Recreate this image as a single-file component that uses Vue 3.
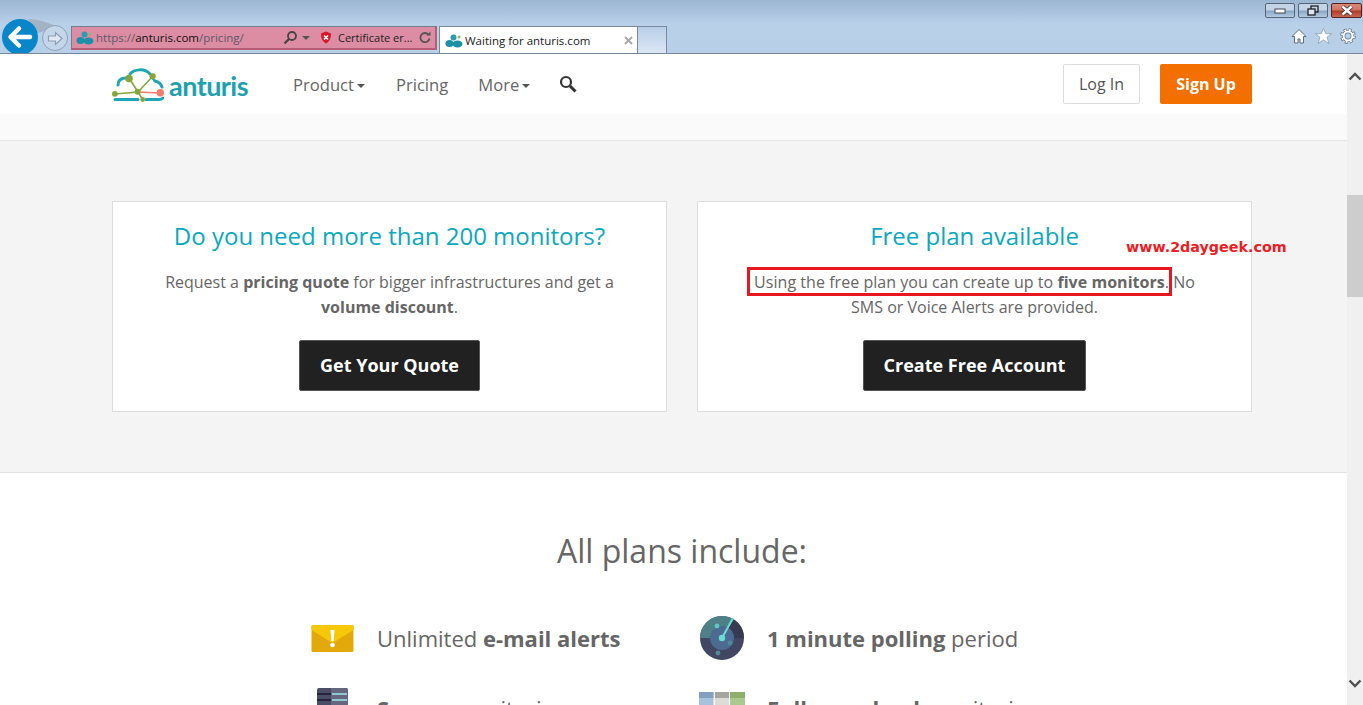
<script setup>
const includes = [
  { pre: 'Unlimited ', bold: 'e-mail alerts', post: '', icon: 'mail' },
  { pre: '', bold: '1 minute polling', post: ' period', icon: 'radar' },
  { pre: '', bold: 'Server', post: ' monitoring', icon: 'server' },
  { pre: '', bold: 'Full-page load', post: ' monitoring', icon: 'page' }
]
</script>

<template>
  <div class="shell">
    <header class="chrome">
      <div class="winbtns">
        <span class="wb"><svg width="12" height="6"><rect x="1" y="1" width="10" height="4" fill="#fff" stroke="#445" stroke-width="1"/></svg></span>
        <span class="wb"><svg width="14" height="12" viewBox="0 0 14 12"><rect x="5" y="1" width="7" height="6" fill="none" stroke="#222" stroke-width="1.300"/><rect x="2" y="4" width="7" height="6" fill="#dde6f2" stroke="#222" stroke-width="1.300"/></svg></span>
        <span class="wb close"><svg width="16" height="11" viewBox="0 0 16 11"><path d="M3.500 1.500l9 8M12.500 1.500l-9 8" stroke="#333" stroke-width="4"/><path d="M3.500 1.500l9 8M12.500 1.500l-9 8" stroke="#fff" stroke-width="2.400"/></svg></span>
      </div>
      <div class="toolbar">
        <div class="navbtns">
          <svg class="halo" width="50" height="16" viewBox="0 0 50 16"><path d="M18 0C30 0 38 4 48 8L28 14z" fill="#a4b3c4"/></svg>
          <span class="back"><svg width="38" height="38" viewBox="0 0 38 38"><path d="M10 19h19M18 10.500 9.500 19l8.500 8.500" fill="none" stroke="#fff" stroke-width="4.500" stroke-linecap="round" stroke-linejoin="round"/></svg></span>
          <span class="fwd"><svg width="17" height="15" viewBox="0 0 17 15"><path d="M1.500 5h7V1.500l6.500 6-6.500 6V10h-7z" fill="#dfe8f3" stroke="#8d9db0" stroke-width="1.200"/></svg></span>
        </div>
        <div class="address">
          <svg class="fav" width="18" height="14" viewBox="0 0 18 14"><ellipse cx="4.500" cy="9.500" rx="4" ry="3.500" fill="#1d8fa6"/><ellipse cx="12.500" cy="10" rx="5" ry="3.500" fill="#1d8fa6"/><circle cx="8.500" cy="3.500" r="3" fill="#2a9db3"/><circle cx="14" cy="3" r="1.500" fill="#8fb66c"/></svg>
          <span class="url"><span class="dim">https://</span>anturis.com<span class="dim">/pricing/</span></span>
          <svg class="lens" width="15" height="15" viewBox="0 0 15 15"><circle cx="9" cy="6" r="4" fill="none" stroke="#444" stroke-width="1.800"/><path d="M6 9l-4.500 4.500" stroke="#444" stroke-width="2.200"/></svg>
          <span class="caret"></span>
          <svg class="shield" width="12" height="13" viewBox="0 0 12 13"><path d="M1 2.500 6 .5l5 2c0 5-1.500 8-5 10-3.500-2-5-5-5-10z" fill="#d8182a"/><path d="M4 4.500l4 4M8 4.500l-4 4" stroke="#fff" stroke-width="1.600"/></svg>
          <span class="cert">Certificate er...</span>
          <svg class="reload" width="12" height="13" viewBox="0 0 12 13"><path d="M9.800 4a4.600 4.600 0 1 0 .7 3.500" fill="none" stroke="#555" stroke-width="1.800"/><path d="M7.500 4.500h4v-4z" fill="#555"/></svg>
        </div>
        <div class="tab">
          <svg class="fav" width="18" height="14" viewBox="0 0 18 14"><ellipse cx="4.500" cy="9.500" rx="4" ry="3.500" fill="#1d8fa6"/><ellipse cx="12.500" cy="10" rx="5" ry="3.500" fill="#1d8fa6"/><circle cx="8.500" cy="3.500" r="3" fill="#2a9db3"/><circle cx="14" cy="3" r="1.500" fill="#8fb66c"/></svg>
          <span class="tabtitle">Waiting for anturis.com</span>
          <svg class="tabx" width="9" height="9" viewBox="0 0 9 9"><path d="M1 1l7 7M8 1l-7 7" stroke="#aaa" stroke-width="2"/></svg>
        </div>
        <div class="newtab"></div>
        <div class="tools">
          <svg width="16" height="16" viewBox="0 0 16 16"><path d="M8 1.500 1 8.500h2.500V15h3.500v-4h2v4h3.500V8.500H15z" fill="#fff" stroke="#5c6e83"/></svg>
          <svg width="17" height="16" viewBox="0 0 17 16"><path d="M8.500 .5l2.300 5.200H16.500l-4.500 3.500 1.800 6.300-5.300-3.600-5.300 3.600 1.800-6.300L.5 5.700h5.700z" fill="#fff" stroke="#8192a8" stroke-width=".7"/></svg>
          <svg width="16" height="16" viewBox="0 0 16 16"><circle cx="8" cy="8" r="6" fill="none" stroke="#5c6e83" stroke-width="3.600" stroke-dasharray="2.700 2"/><circle cx="8" cy="8" r="4.400" fill="none" stroke="#5c6e83" stroke-width="3.400"/><circle cx="8" cy="8" r="4.400" fill="none" stroke="#fff" stroke-width="2"/><circle cx="8" cy="8" r="6" fill="none" stroke="#fff" stroke-width="2" stroke-dasharray="1.800 2.900" stroke-dashoffset="-.45"/></svg>
        </div>
      </div>
    </header>

    <div class="viewport">
      <main class="page">
        <nav class="nav">
          <div class="brand">
            <svg width="52" height="34" viewBox="0 0 52 34">
              <path d="M18 6C22 1 33 0 38 6M6 17C6 12 9 10 14 10M43 13C47 14 49 16 50 19M3 31.500H26M34 31.500H47C49 31.500 50 31 51 30" fill="none" stroke="#1fa5b5" stroke-width="3" stroke-linecap="round"/>
              <path d="M38 8l5 5" stroke="#1fa5b5" stroke-width="2"/>
              <path d="M3 26 26 24 41 8M17 10 26 24 31 32" fill="none" stroke="#86a63c" stroke-width="1.600"/>
              <path d="M26 24l22 1" stroke="#f47c6e" stroke-width="1.600"/>
              <circle cx="17" cy="10.500" r="3.800" fill="#86a63c"/><circle cx="40.700" cy="8.300" r="3" fill="#86a63c"/><circle cx="2.900" cy="25.800" r="2.900" fill="#86a63c"/><circle cx="25.700" cy="23.700" r="3" fill="#86a63c"/><circle cx="30.700" cy="31.500" r="2.400" fill="#86a63c"/><circle cx="48.300" cy="24.800" r="3.700" fill="#f47c6e"/>
            </svg>
            <span class="wordmark">anturis</span>
          </div>
          <ul class="links">
            <li>Product<i class="drop"></i></li>
            <li>Pricing</li>
            <li>More<i class="drop"></i></li>
            <li class="find"><svg width="18" height="18" viewBox="0 0 18 18"><circle cx="7" cy="7" r="5" fill="none" stroke="#333" stroke-width="2.200"/><path d="M11 11l5.500 5.500" stroke="#333" stroke-width="3"/></svg></li>
          </ul>
          <div class="auth">
            <a class="login">Log In</a>
            <a class="signup">Sign Up</a>
          </div>
        </nav>
        <div class="strip"></div>

        <section class="band">
          <div class="cards">
            <article class="card">
              <h2>Do you need more than 200 monitors?</h2>
              <p>Request a <b>pricing quote</b> for bigger infrastructures and get a <b>volume discount</b>.</p>
              <a class="cta">Get Your Quote</a>
            </article>
            <article class="card">
              <h2>Free plan available</h2>
              <p><span class="mark">Using the free plan you can create up to <b>five monitors</b>.</span> No<br>SMS or Voice Alerts are provided.</p>
              <a class="cta">Create Free Account</a>
              <span class="watermark">www.2daygeek.com</span>
            </article>
          </div>
        </section>

        <section class="plans">
          <h1>All plans include:</h1>
          <div class="grid">
            <div v-for="item in includes" :key="item.bold" class="feat">
              <span class="ico">
                <svg v-if="item.icon === 'mail'" width="43" height="27" viewBox="0 0 42 27"><rect width="42" height="27" rx="1.500" fill="#e3a90b"/><path d="M0 1.500Q0 0 1.500 0h39Q42 0 42 1.500V5L21 18 0 5z" fill="#f7c808"/><path d="M19 5h4l-.8 11h-2.400z" fill="#fff"/><circle cx="21" cy="20" r="2.300" fill="#fff"/></svg>
                <svg v-else-if="item.icon === 'radar'" width="44" height="44" viewBox="0 0 44 44"><circle cx="22" cy="22" r="22" fill="#414763"/><path d="M0 22A22 22 0 0 1 34 3.500L22 22z" fill="#4f8088"/><path d="M34 3.500A22 22 0 0 1 44 22H22z" fill="#373a52"/><circle cx="22" cy="22" r="12" fill="#4d6a90"/><path d="M22 22 33 2" stroke="#6adbd5" stroke-width="2"/><circle cx="22" cy="22" r="3.200" fill="#6adbd5"/><circle cx="17" cy="10" r="2.400" fill="#5fc7c5"/><circle cx="30" cy="27" r="2.400" fill="#4f8a96"/><circle cx="18" cy="37" r="2.400" fill="#4f8a96"/></svg>
                <svg v-else-if="item.icon === 'server'" width="31" height="40" viewBox="0 0 31 40"><rect width="31" height="40" rx="2" fill="#4b4c66"/><path d="M14 0h15a2 2 0 0 1 2 2v38H14z" fill="#65677f"/><path d="M0 6h14M0 12h14" stroke="#24243a" stroke-width="2"/><path d="M15 6h15M15 12h15" stroke="#8ec8d0" stroke-width="2"/></svg>
                <svg v-else width="46" height="32" viewBox="0 0 46 32"><rect width="14.500" height="32" fill="#a8c0dc"/><rect width="14.500" height="6" fill="#83a0c0"/><rect x="16" width="14" height="32" fill="#dcdbd6"/><rect x="16" width="14" height="6" fill="#a5a49e"/><rect x="31" width="15" height="32" rx="1" fill="#a9c98e"/><rect x="31" width="15" height="6" fill="#8ab06a"/></svg>
              </span>
              <span class="ftext">{{ item.pre }}<b>{{ item.bold }}</b>{{ item.post }}</span>
            </div>
          </div>
        </section>
      </main>

      <aside class="scroll">
        <svg class="arrow" width="14" height="9" viewBox="0 0 14 9"><path d="M1.500 7.500 7 2l5.500 5.500" fill="none" stroke="#505050" stroke-width="2.400"/></svg>
        <div class="thumb"></div>
        <svg class="arrow down" width="14" height="9" viewBox="0 0 14 9"><path d="M1.500 1.500 7 7l5.500-5.500" fill="none" stroke="#505050" stroke-width="2.400"/></svg>
      </aside>
    </div>
  </div>
</template>

<style>
html, body { margin: 0; overflow: hidden; background: #fff; }
</style>

<style scoped>
.shell { width: 1363px; height: 705px; overflow: hidden; display: flex; flex-direction: column; font-family: "Open Sans", sans-serif; color: #666; }
.chrome { height: 54px; box-sizing: border-box; position: relative; border-bottom: 1px solid #76879b; background: linear-gradient(#9cb6d2 0, #b9d0e9 24px, #b8cfe8 100%); display: flex; align-items: flex-end; flex: none; }
.winbtns { position: absolute; top: 3px; right: 1px; display: flex; gap: 3px; }
.wb { width: 30px; height: 15px; box-sizing: border-box; border: 1px solid #56667a; border-radius: 2px; background: linear-gradient(#c3d4e8 0, #c3d4e8 45%, #8ba7c4 55%, #b5cbe2 100%); display: flex; align-items: center; justify-content: center; }
.wb.close { background: linear-gradient(#d98a78 0, #d4725f 45%, #b13a26 55%, #c76a55 100%); border-color: #5a2020; width: 31px; }
.toolbar { flex: 1; height: 34px; display: flex; align-items: flex-end; position: relative; }
.navbtns { width: 71px; height: 34px; display: flex; align-items: flex-start; flex: none; position: relative; overflow: hidden; }
.halo { position: absolute; left: 10px; top: 0; }
.back { width: 36px; height: 36px; margin: 0 0 0 2px; border-radius: 50%; background: #0886c9; display: flex; align-items: center; justify-content: center; flex: none; position: relative; overflow: hidden; }
.back svg { flex: none; }
.fwd { width: 26px; height: 26px; margin: 6px 0 0 4px; box-sizing: border-box; border: 1px solid #8fa3b8; border-radius: 50%; display: flex; align-items: center; justify-content: center; background: #c3d6ea; flex: none; position: relative; }
.address { width: 366px; height: 24px; box-sizing: border-box; margin: 0 0 3px 0; border: 1px solid #6f7f90; border-right: 2px solid #b65c74; border-bottom: 2px solid #b65c74; background: #dc8ca3; display: flex; align-items: center; padding-left: 4px; font-size: 11px; flex: none; color: #222; }
.fav { flex: none; }
.url { margin-left: 2px; width: 184px; font-size: 11.500px; color: #111; white-space: nowrap; }
.dim { color: #5d5a6a; }
.lens { margin-left: 3px; }
.caret { width: 0; height: 0; border: 4px solid transparent; border-top-color: #555; border-bottom: 0; margin-left: 4px; }
.shield { margin-left: 10px; }
.cert { margin-left: 6px; width: 81px; font-size: 11px; white-space: nowrap; }
.tab { width: 199px; height: 27px; box-sizing: border-box; margin-left: 2px; background: #fff; border: 1px solid #7a8a9c; border-bottom: 0; display: flex; align-items: center; padding: 1px 4px 0 5px; flex: none; color: #222; }
.tabtitle { font-size: 11.500px; margin-left: 2px; width: 159px; white-space: nowrap; }
.newtab { width: 29px; height: 27px; box-sizing: border-box; border: 1px solid #7a8a9c; border-left: 0; border-bottom: 0; background: linear-gradient(#b8cee8, #dce7f4); flex: none; }
.tools { margin-left: auto; display: flex; align-items: center; gap: 8px; height: 34px; padding-right: 7px; }
.viewport { flex: 1; display: flex; min-height: 0; }
.page { flex: 1; min-width: 0; }
.nav { height: 60px; display: flex; align-items: center; padding: 0 95px 0 112px; background: #fff; }
.brand { display: flex; align-items: center; width: 181px; flex: none; position: relative; top: 1px; }
.wordmark { font-family: "Lato", sans-serif; font-size: 27px; font-weight: 700; color: #1da1b1; margin-left: 5px; line-height: 1; letter-spacing: -.55px; }
.links { list-style: none; display: flex; align-items: center; margin: 0; padding: 0; font-size: 16.600px; gap: 30px; color: #666; }
.drop { display: inline-block; width: 0; height: 0; border: 4px solid transparent; border-top-color: #555; border-bottom: 0; vertical-align: middle; margin: 0 1px 0 3px; }
.find { display: flex; margin-left: -2px; }
.auth { margin-left: auto; display: flex; gap: 20px; }
.auth a { height: 40px; box-sizing: border-box; display: flex; align-items: center; justify-content: center; border-radius: 2px; font-size: 16px; }
.login { width: 77px; border: 1px solid #ddd; color: #555; }
.signup { width: 92px; background: #f26f00; color: #fff; font-weight: 700; }
.strip { height: 26px; background: #fafafa; border-bottom: 1px solid #e6e6e6; }
.band { height: 332px; box-sizing: border-box; background: #f4f4f4; border-bottom: 1px solid #e2e2e2; padding: 60px 0 0 112px; }
.cards { width: 1140px; display: flex; gap: 30px; }
.card { flex: 1; height: 211px; box-sizing: border-box; position: relative; background: #fff; border: 1px solid #ddd; padding: 17px 34px 0; text-align: center; }
h2 { margin: 0; font-size: 24px; line-height: 34px; font-weight: 400; color: #0aa9bf; }
.card p { margin: 17px 0 20px; font-size: 16px; line-height: 25px; color: #666; }
.card b { font-weight: 700; }
.mark { position: relative; letter-spacing: .04px; }
.mark::after { content: ""; position: absolute; left: -7px; right: -3px; top: -4px; bottom: -3px; border: 3px solid #e8171f; pointer-events: none; }
.cta { display: inline-block; box-sizing: border-box; height: 51px; line-height: 49px; padding: 0 20px; border: 1px solid #555; background: #212121; color: #fff; font-size: 18px; font-weight: 700; border-radius: 2px; }
.watermark { position: absolute; left: 428px; top: 37px; font-family: "DejaVu Sans", sans-serif; font-size: 14.300px; font-weight: 700; color: #ee1c25; white-space: nowrap; }
.plans { background: #fff; text-align: center; }
h1 { margin: 0; padding: 56px 0 0 17px; font-size: 32px; line-height: 44px; font-weight: 400; color: #666; }
.grid { display: grid; grid-template-columns: 390px 390px; margin: 42px 0 0 308px; row-gap: 24px; text-align: left; }
.feat { display: flex; align-items: center; height: 46px; }
.ico { width: 48px; margin-right: 21px; flex: none; display: flex; justify-content: center; align-items: center; height: 46px; }
.ico svg { flex: none; }
.ftext { font-size: 22px; color: #666; white-space: nowrap; }
.scroll { width: 16px; flex: none; background: #f0f0f0; position: relative; display: flex; flex-direction: column; align-items: center; }
.arrow { margin-top: 18px; flex: none; }
.thumb { position: absolute; left: 0; right: 0; top: 141px; height: 102px; background: #cdcdcd; }
.down { margin-top: auto; margin-bottom: 17px; }
</style>
